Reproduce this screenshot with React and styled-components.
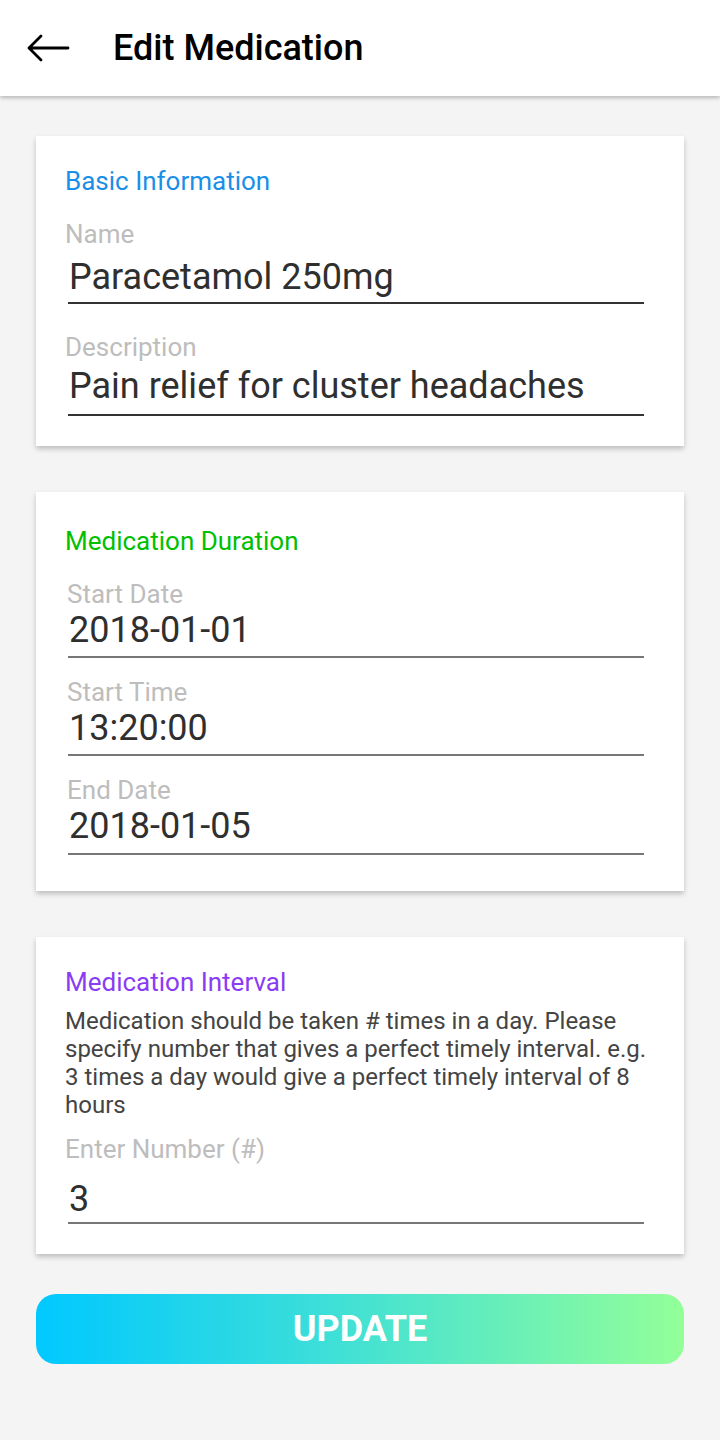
import React from "react";
import styled, { createGlobalStyle } from "styled-components";

const GlobalStyle = createGlobalStyle`
  body {
    margin: 0;
    background-color: #f4f4f4;
    font-family: Roboto, "Liberation Sans", sans-serif;
  }
`;

const Page = styled.div`
  min-height: 1440px;
  background-color: #f4f4f4;
`;

const TopBar = styled.div`
  display: flex;
  align-items: center;
  height: 96px;
  background-color: #ffffff;
  box-shadow: 0 2px 4px rgba(0, 0, 0, 0.25);
  padding-left: 26px;
`;

const BackButton = styled.div`
  display: flex;
  width: 44px;
  height: 30px;
  margin-right: 43px;
`;

const Title = styled.h1`
  margin: 0;
  font-size: 36px;
  font-weight: 500;
  color: #000;
`;

const Content = styled.div`
  display: flex;
  flex-direction: column;
  gap: 46px;
  padding: 40px 36px 0;
`;

const Card = styled.div`
  background-color: #ffffff;
  box-shadow: 0 3px 5px rgba(0, 0, 0, 0.22);
  padding: ${(p) => p.$padding || "29px 18px 30px 29px"};
`;

const CardTitle = styled.div`
  font-size: 26px;
  line-height: 32px;
  color: ${(p) => p.$color};
  margin-bottom: ${(p) => p.$gap || "22px"};
`;

const Field = styled.div`
  display: flex;
  flex-direction: column;
  margin-top: ${(p) => p.$top || "0"};
`;

const Label = styled.div`
  font-size: 26px;
  line-height: 30px;
  color: #bdbdbd;
  margin-left: ${(p) => p.$indent || "0"};
`;

const Value = styled.div`
  margin: ${(p) => p.$top || "0"} 22px 0 3px;
  padding: 0 0 ${(p) => p.$bottom || "5px"} 1px;
  font-size: 36px;
  line-height: 42px;
  color: #2f2f2f;
  border-bottom: 2px solid ${(p) => p.$line || "#777777"};
`;

const Hint = styled.p`
  margin: 0 8px 15px 0;
  font-size: 24px;
  line-height: 28px;
  color: #444444;
`;

const UpdateButton = styled.button`
  width: 648px;
  height: 70px;
  margin-top: -6px;
  border: none;
  border-radius: 20px;
  background: linear-gradient(90deg, #00c8ff 0%, #3ddfd8 45%, #93ff98 100%);
  color: #ffffff;
  font-family: Roboto, "Liberation Sans", sans-serif;
  font-size: 36px;
  font-weight: 700;
  cursor: pointer;
`;

function App() {
  return (
    <Page>
      <GlobalStyle />
      <TopBar>
        <BackButton>
          <svg width="44" height="30" viewBox="0 0 44 30" fill="none">
            <path
              d="M3 15 H42 M15 3 L3 15 L15 27"
              stroke="#000"
              strokeWidth="2.8"
              strokeLinecap="round"
              strokeLinejoin="round"
            />
          </svg>
        </BackButton>
        <Title>Edit Medication</Title>
      </TopBar>

      <Content>
        <Card>
          <CardTitle $color="#1a8fe8">Basic Information</CardTitle>
          <Field>
            <Label>Name</Label>
            <Value $top="7px" $bottom="4px" $line="#333333">
              Paracetamol 250mg
            </Value>
          </Field>
          <Field $top="28px">
            <Label>Description</Label>
            <Value $top="3px" $bottom="7px" $line="#333333">
              Pain relief for cluster headaches
            </Value>
          </Field>
        </Card>

        <Card $padding="33px 18px 36px 29px">
          <CardTitle $color="#00c000">Medication Duration</CardTitle>
          <Field>
            <Label $indent="2px">Start Date</Label>
            <Value>2018-01-01</Value>
          </Field>
          <Field $top="19px">
            <Label $indent="2px">Start Time</Label>
            <Value>13:20:00</Value>
          </Field>
          <Field $top="19px">
            <Label $indent="2px">End Date</Label>
            <Value $bottom="6px">2018-01-05</Value>
          </Field>
        </Card>

        <Card>
          <CardTitle $color="#8a3cf5" $gap="9px">
            Medication Interval
          </CardTitle>
          <Hint>
            Medication should be taken # times in a day. Please specify number
            that gives a perfect timely interval. e.g. 3 times a day would give
            a perfect timely interval of 8 hours
          </Hint>
          <Field>
            <Label>Enter Number (#)</Label>
            <Value $top="14px" $bottom="2px">
              3
            </Value>
          </Field>
        </Card>

        <UpdateButton>UPDATE</UpdateButton>
      </Content>
    </Page>
  );
}

export default App;
